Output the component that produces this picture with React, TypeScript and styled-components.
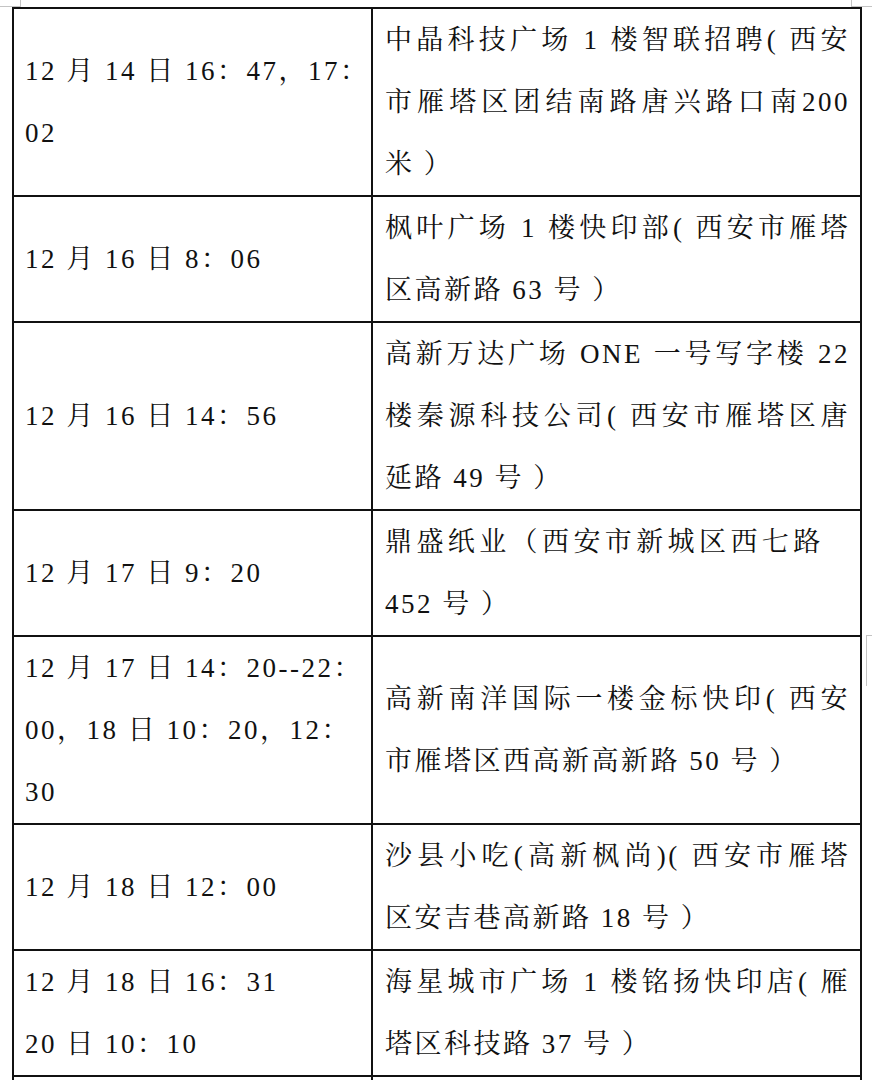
import React from 'react';
import styled, { createGlobalStyle } from 'styled-components';

type Line = { text: string; full?: boolean; tracking?: number };

type Row = {
	time: Line[];
	place: Line[];
};

const rows: Row[] = [
	{
		time: [{ text: '12 月 14 日 16：47，17：' }, { text: '02' }],
		place: [
			{ text: '中晶科技广场 1 楼智联招聘( 西安', full: true },
			{ text: '市雁塔区团结南路唐兴路口南200', full: true },
			{ text: '米 ）' },
		],
	},
	{
		time: [{ text: '12 月 16 日 8：06' }],
		place: [
			{ text: '枫叶广场 1 楼快印部( 西安市雁塔', full: true },
			{ text: '区高新路 63 号 ）' },
		],
	},
	{
		time: [{ text: '12 月 16 日 14：56' }],
		place: [
			{ text: '高新万达广场 ONE 一号写字楼 22', full: true },
			{ text: '楼秦源科技公司( 西安市雁塔区唐', full: true },
			{ text: '延路 49 号 ）' },
		],
	},
	{
		time: [{ text: '12 月 17 日 9：20' }],
		place: [
			{ text: '鼎盛纸业（西安市新城区西七路', tracking: 4.4 },
			{ text: '452 号 ）' },
		],
	},
	{
		time: [
			{ text: '12 月 17 日 14：20--22：' },
			{ text: '00，18 日 10：20，12：' },
			{ text: '30' },
		],
		place: [
			{ text: '高新南洋国际一楼金标快印( 西安', full: true },
			{ text: '市雁塔区西高新高新路 50 号 ）' },
		],
	},
	{
		time: [{ text: '12 月 18 日 12：00' }],
		place: [
			{ text: '沙县小吃(高新枫尚)( 西安市雁塔', full: true },
			{ text: '区安吉巷高新路 18 号 ）' },
		],
	},
	{
		time: [{ text: '12 月 18 日 16：31' }, { text: '20 日 10：10' }],
		place: [
			{ text: '海星城市广场 1 楼铭扬快印店( 雁', full: true },
			{ text: '塔区科技路 37 号 ）' },
		],
	},
	{
		time: [{ text: '' }, { text: '' }],
		place: [{ text: '' }, { text: '' }],
	},
];

const renderLines = (lines: Line[]) =>
	lines.map((line, i) => (
		<TextLine key={i} $full={line.full} $tracking={line.tracking}>
			{line.text || '\u00a0'}
		</TextLine>
	));

const App: React.FC = () => {
	return (
		<>
			<GlobalStyle />
			<Page>
				<CornerMark $side="topLeft" />
				<CornerMark $side="topRight" />
				<EdgeMark />
				<Table>
					{rows.map((row, i) => (
						<React.Fragment key={i}>
							<TimeCell>{renderLines(row.time)}</TimeCell>
							<PlaceCell>{renderLines(row.place)}</PlaceCell>
						</React.Fragment>
					))}
				</Table>
			</Page>
		</>
	);
};

export default App;

const GlobalStyle = createGlobalStyle`
	html, body {
		margin: 0;
		padding: 0;
		background: #fff;
	}
	body {
		font-family: "Liberation Serif", "Noto Serif CJK SC", "Noto Sans CJK SC", serif;
		color: #111;
	}
`;

const Page = styled.div`
	position: relative;
	padding: 7px 0 0 12px;
	min-height: 1080px;
	overflow: hidden;
`;

const Table = styled.div`
	display: grid;
	grid-template-columns: 359px 489px;
	width: max-content;
	border-top: 2px solid #111;
	border-left: 2px solid #111;
`;

const Cell = styled.div`
	box-sizing: border-box;
	display: flex;
	flex-direction: column;
	justify-content: center;
	border-right: 2px solid #111;
	border-bottom: 2px solid #111;
	font-size: 27px;
	letter-spacing: 2.5px;
`;

const TimeCell = styled(Cell)`
	padding: 0 0 0 11px;
`;

const PlaceCell = styled(Cell)`
	padding: 0 10px 0 12px;
`;

const TextLine = styled.div<{ $full?: boolean; $tracking?: number }>`
	line-height: 62px;
	white-space: nowrap;
	text-align: ${({ $full }) => ($full ? 'justify' : 'left')};
	text-align-last: ${({ $full }) => ($full ? 'justify' : 'left')};
	${({ $tracking }) => ($tracking ? `letter-spacing: ${$tracking}px;` : '')}
`;

const CornerMark = styled.div<{ $side: 'topLeft' | 'topRight' }>`
	position: absolute;
	top: 0;
	width: 20px;
	height: 6px;
	border-bottom: 1px solid #c4c4c4;
	${({ $side }) =>
		$side === 'topLeft'
			? 'left: 0; border-right: 1px solid #c4c4c4;'
			: 'right: 0; border-left: 1px solid #c4c4c4;'}
`;

const EdgeMark = styled.div`
	position: absolute;
	top: 635px;
	right: 0;
	width: 5px;
	height: 50px;
	border-top: 1px solid #c4c4c4;
	border-left: 1px solid #c4c4c4;
`;
